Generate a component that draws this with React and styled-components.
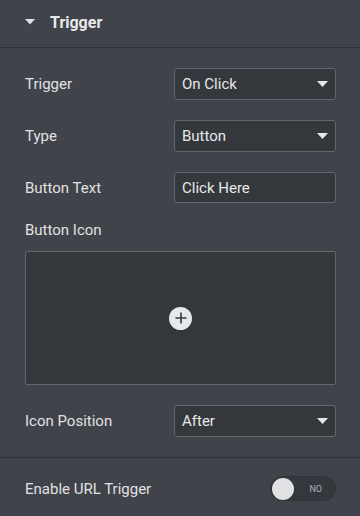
import styled, { createGlobalStyle } from "styled-components"

const GlobalStyle = createGlobalStyle`
    html, body {
        margin: 0;
        padding: 0;
        background: #404349;
    }
    * {
        box-sizing: border-box;
    }
`

function Caret() {
    return (
        <svg width="11" height="6" viewBox="0 0 11 6">
            <path d="M0 0 L11 0 L5.5 6 Z" fill="#e6e8ea" />
        </svg>
    )
}

function SelectField({ value }) {
    return (
        <Select>
            <span>{value}</span>
            <Caret />
        </Select>
    )
}

export default function App() {
    return (
        <Panel>
            <GlobalStyle />
            <Header>
                <svg width="10" height="6" viewBox="0 0 10 6">
                    <path d="M0 0 L10 0 L5 5.5 Z" fill="#e0e1e3" />
                </svg>
                Trigger
            </Header>

            <Section>
                <Row>
                    <Label>Trigger</Label>
                    <SelectField value="On Click" />
                </Row>
                <Row>
                    <Label>Type</Label>
                    <SelectField value="Button" />
                </Row>
                <Row>
                    <Label>Button Text</Label>
                    <TextInput>Click Here</TextInput>
                </Row>
                <Stack>
                    <Label>Button Icon</Label>
                    <IconBox>
                        <PlusButton>
                            <svg width="12" height="12" viewBox="0 0 12 12">
                                <path d="M6 0.5 V11.5 M0.5 6 H11.5" stroke="#34383c" strokeWidth="1.6" />
                            </svg>
                        </PlusButton>
                    </IconBox>
                </Stack>
                <Row>
                    <Label>Icon Position</Label>
                    <SelectField value="After" />
                </Row>
            </Section>

            <Section $last>
                <Row>
                    <Label>Enable URL Trigger</Label>
                    <Toggle>
                        <Knob />
                        <span>NO</span>
                    </Toggle>
                </Row>
            </Section>
        </Panel>
    )
}

const Panel = styled.div`
    width: 360px;
    height: 516px;
    background: #404349;
    font-family: Roboto, "Liberation Sans", sans-serif;
    color: #e0e1e3;
    overflow: hidden;
`
const Header = styled.div`
    height: 48px;
    display: flex;
    align-items: center;
    gap: 15px;
    padding: 0 25px 3px;
    border-bottom: 1px solid #2f3236;
    font-size: 16px;
    font-weight: 700;
    color: #e6e8ea;
`
const Section = styled.div`
    display: flex;
    flex-direction: column;
    gap: 20px;
    padding: ${props => props.$last ? "18px 24px 20px 25px" : "20px 24px 20px 25px"};
    border-bottom: ${props => props.$last ? "none" : "1px solid #2f3236"};
`
const Row = styled.div`
    display: flex;
    align-items: center;
    justify-content: space-between;
`
const Stack = styled.div`
    display: flex;
    flex-direction: column;
    gap: 13px;
    margin-top: -1px;
`
const Label = styled.div`
    font-size: 15px;
    line-height: 16px;
    color: #e0e1e3;
`
const Select = styled.div`
    width: 162px;
    height: 32px;
    display: flex;
    align-items: center;
    justify-content: space-between;
    padding: 0 7px 0 7px;
    background: #34383c;
    border: 1px solid #64666a;
    border-radius: 3px;
    font-size: 15px;
    color: #e6e8ea;
`
const TextInput = styled.div`
    width: 162px;
    height: 31px;
    display: flex;
    align-items: center;
    padding: 0 7px;
    background: #34383c;
    border: 1px solid #64666a;
    border-radius: 3px;
    font-size: 15px;
    color: #e6e8ea;
`
const IconBox = styled.div`
    height: 134px;
    display: flex;
    align-items: center;
    justify-content: center;
    background: #34383c;
    border: 1px solid #64666a;
    border-radius: 2px;
`
const PlusButton = styled.div`
    width: 23px;
    height: 23px;
    border-radius: 50%;
    background: #e6e8ea;
    display: flex;
    align-items: center;
    justify-content: center;
`
const Toggle = styled.div`
    width: 66px;
    height: 25px;
    border-radius: 13px;
    background: #34383c;
    border: 1px solid #2f3236;
    display: flex;
    align-items: center;
    justify-content: space-between;
    padding: 0 13px 0 1px;
    font-size: 9px;
    color: #a4afb7;
`
const Knob = styled.div`
    width: 22px;
    height: 22px;
    border-radius: 50%;
    background: #e0e1e3;
`
